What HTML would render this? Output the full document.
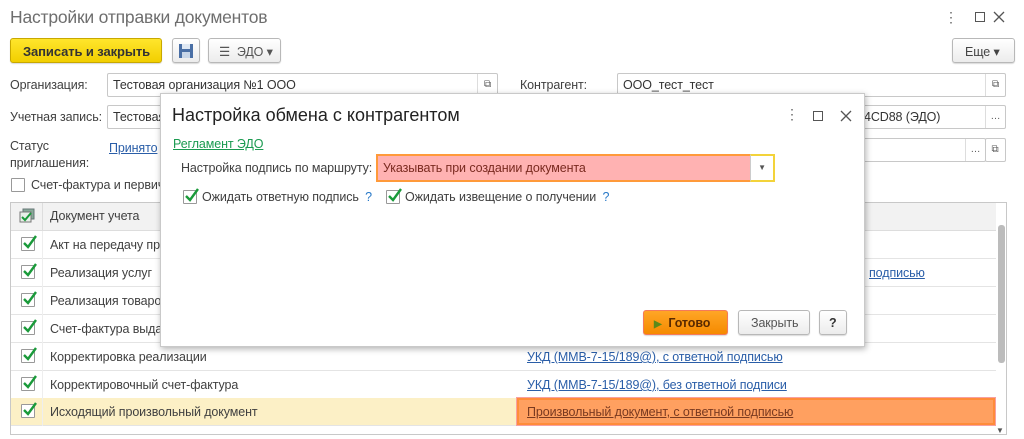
<!DOCTYPE html>
<html><head><meta charset="utf-8"><style>
*{box-sizing:border-box;margin:0;padding:0}
body{width:1024px;height:439px;overflow:hidden;background:#fff;font-family:"Liberation Sans",sans-serif;font-size:12.5px;letter-spacing:-0.1px;color:#404040;position:relative}
.a{position:absolute;white-space:nowrap}
.inp{position:absolute;border:1px solid #c8c8c8;border-radius:2px;background:#fff;height:24px;padding:4px 5px;color:#333}
.btn{position:absolute;border:1px solid #b8b8b8;border-radius:3px;background:linear-gradient(#fff,#ececec);height:25px;box-shadow:0 1px 1px rgba(0,0,0,.15)}
.ib{position:absolute;border-left:1px solid #ddd;width:20px;height:22px;top:0;right:0;font-size:10px;color:#555;text-align:center;line-height:22px}
.cb{position:absolute;width:14px;height:14px;border:1px solid #999;background:#fff;border-radius:1px}
.cb svg{position:absolute;left:0;top:-3px}
.row{position:absolute;left:11px;width:985px;height:28px;border-bottom:1px solid #e4e4e4}
.row .t{position:absolute;left:39px;top:7px}
.row .cb{left:10px;top:6px}
.lnk{color:#2a5ea8;text-decoration:underline}
</style></head><body>
<div class="a" style="left:10px;top:7px;font-size:17.5px;color:#6e6e6e;letter-spacing:-0.2px">Настройки отправки документов</div>
<div class="a" style="left:944px;top:9px;font-size:14px;color:#666">⋮</div>
<div class="a" style="left:975px;top:12px;width:10px;height:10px;border:1.5px solid #555"></div>
<svg class="a" style="left:993px;top:11px" width="12" height="12"><path d="M1 1L11 11M11 1L1 11" stroke="#555" stroke-width="1.3"/></svg>

<div class="btn" style="left:10px;top:38px;width:152px;background:linear-gradient(#ffe62c,#f2cf00);border-color:#c8a800;font-weight:bold;color:#333;padding:5px 0 0 12px;font-size:13px">Записать и закрыть</div>
<div class="btn" style="left:172px;top:38px;width:28px"><svg width="16" height="16" style="margin:4px 5px" viewBox="0 0 16 16"><rect x="1" y="1" width="14" height="14" fill="#4a6fa5"/><rect x="4" y="1" width="8" height="5" fill="#dfe8f3"/><rect x="4" y="9" width="8" height="6" fill="#c8d6e8"/></svg></div>
<div class="btn" style="left:208px;top:38px;width:73px;color:#555;padding:5px 0 0 10px">☰&nbsp; ЭДО ▾</div>
<div class="btn" style="left:952px;top:38px;width:63px;color:#444;padding:5px 0 0 12px">Еще ▾</div>

<div class="a" style="left:10px;top:78px">Организация:</div>
<div class="inp" style="left:107px;top:73px;width:391px">Тестовая организация №1 ООО<div class="ib">⧉</div></div>
<div class="a" style="left:520px;top:78px">Контрагент:</div>
<div class="inp" style="left:617px;top:73px;width:389px">ООО_тест_тест<div class="ib">⧉</div></div>
<div class="a" style="left:10px;top:110px">Учетная запись:</div>
<div class="inp" style="left:107px;top:105px;width:200px">Тестовая</div>
<div class="inp" style="left:820px;top:105px;width:186px;padding-left:43px">4CD88 (ЭДО)<div class="ib">…</div></div>
<div class="a" style="left:10px;top:138px;line-height:17px">Статус<br>приглашения:</div>
<div class="a lnk" style="left:109px;top:141px">Принято</div>
<div class="inp" style="left:820px;top:138px;width:166px"><div class="ib">…</div></div>
<div class="inp" style="left:985px;top:138px;width:21px;padding:0"><div class="ib" style="border:0">⧉</div></div>
<div class="cb" style="left:11px;top:178px;width:14px;height:14px"></div>
<div class="a" style="left:31px;top:178px">Счет-фактура и первич</div>

<div class="a" style="left:10px;top:202px;width:997px;height:233px;border:1px solid #c8c8c8"></div>
<div class="a" style="left:11px;top:203px;width:985px;height:28px;background:#f2f2f2;border-bottom:1px solid #ddd"></div>
<div class="a" style="left:42px;top:203px;width:1px;height:28px;background:#ddd"></div>
<div class="a" style="left:19px;top:208px"><svg width="16" height="16"><rect x="4" y="1" width="11" height="10" fill="#8a9" stroke="#677"/><rect x="1" y="4" width="11" height="10" fill="#e8f0e8" stroke="#777"/><path d="M3 9l3 3 6-7" stroke="#1a9a3a" stroke-width="2" fill="none"/></svg></div>
<div class="a" style="left:50px;top:209px">Документ учета</div>

<div class="row" style="top:231px"><div class="cb"><svg width="16" height="16"><path d="M2 8l4 4 8-11" stroke="#1a9a3a" stroke-width="2.4" fill="none"/></svg></div><div class="t">Акт на передачу пр</div></div>
<div class="row" style="top:259px"><div class="cb"><svg width="16" height="16"><path d="M2 8l4 4 8-11" stroke="#1a9a3a" stroke-width="2.4" fill="none"/></svg></div><div class="t">Реализация услуг</div><div class="t lnk" style="left:858px">подписью</div></div>
<div class="row" style="top:287px"><div class="cb"><svg width="16" height="16"><path d="M2 8l4 4 8-11" stroke="#1a9a3a" stroke-width="2.4" fill="none"/></svg></div><div class="t">Реализация товаро</div></div>
<div class="row" style="top:315px"><div class="cb"><svg width="16" height="16"><path d="M2 8l4 4 8-11" stroke="#1a9a3a" stroke-width="2.4" fill="none"/></svg></div><div class="t">Счет-фактура выда</div></div>
<div class="row" style="top:343px"><div class="cb"><svg width="16" height="16"><path d="M2 8l4 4 8-11" stroke="#1a9a3a" stroke-width="2.4" fill="none"/></svg></div><div class="t">Корректировка реализации</div><div class="t lnk" style="left:516px">УКД (ММВ-7-15/189@), с ответной подписью</div></div>
<div class="row" style="top:371px"><div class="cb"><svg width="16" height="16"><path d="M2 8l4 4 8-11" stroke="#1a9a3a" stroke-width="2.4" fill="none"/></svg></div><div class="t">Корректировочный счет-фактура</div><div class="t lnk" style="left:516px">УКД (ММВ-7-15/189@), без ответной подписи</div></div>
<div class="row" style="top:398px;background:#fcf0c6"><div class="cb"><svg width="16" height="16"><path d="M2 8l4 4 8-11" stroke="#1a9a3a" stroke-width="2.4" fill="none"/></svg></div><div class="t">Исходящий произвольный документ</div>
<div class="a" style="left:506px;top:0;width:478px;height:27px;background:#ffa060;border:2px solid #ff8c3a;box-shadow:0 0 0 1px #f7a0a0"></div><div class="t" style="left:516px;color:#7a3a20;text-decoration:underline">Произвольный документ, с ответной подписью</div></div>
<div class="a" style="left:42px;top:231px;width:1px;height:195px;background:#eee"></div>
<div class="a" style="left:998px;top:225px;width:7px;height:138px;background:#bcbcbc;border-radius:3px"></div>
<div class="a" style="left:996px;top:426px;font-size:8px;color:#555">▼</div>

<div class="a" style="left:160px;top:93px;width:705px;height:254px;background:#fff;border:1px solid #c9c9c9;box-shadow:1px 2px 6px rgba(0,0,0,.3)">
<div class="a" style="left:11px;top:11px;font-size:18px;color:#222;letter-spacing:0">Настройка обмена с контрагентом</div>
<div class="a" style="left:624px;top:12px;font-size:14px;color:#666">⋮</div>
<div class="a" style="left:652px;top:17px;width:10px;height:10px;border:1.5px solid #555"></div>
<svg class="a" style="left:679px;top:16px" width="12" height="12"><path d="M1 1L11 11M11 1L1 11" stroke="#555" stroke-width="1.3"/></svg>
<div class="a" style="left:12px;top:43px;color:#1a9a50;text-decoration:underline">Регламент ЭДО</div>
<div class="a" style="left:20px;top:67px">Настройка подпись по маршруту:</div>
<div class="a" style="left:215px;top:60px;width:398px;height:28px;background:#ffb2b2;border:2px solid #ff9a3a;padding:5px 0 0 5px;color:#7a2a20">Указывать при создании документа</div>
<div class="a" style="left:589px;top:60px;width:25px;height:28px;background:#fff;border:2px solid #f3d33a;border-left:1px solid #ccc;font-size:8px;text-align:center;line-height:24px;color:#555">▼</div>
<div class="cb" style="left:22px;top:96px"><svg width="16" height="16"><path d="M2 8l4 4 8-11" stroke="#1a9a3a" stroke-width="2.4" fill="none"/></svg></div>
<div class="a" style="left:41px;top:96px">Ожидать ответную подпись <span style="color:#2a7ac8;margin-left:3px">?</span></div>
<div class="cb" style="left:225px;top:96px"><svg width="16" height="16"><path d="M2 8l4 4 8-11" stroke="#1a9a3a" stroke-width="2.4" fill="none"/></svg></div>
<div class="a" style="left:244px;top:96px">Ожидать извещение о получении <span style="color:#2a7ac8;margin-left:3px">?</span></div>
<div class="btn" style="left:482px;top:216px;width:85px;background:linear-gradient(#ffa626,#f58a00);border-color:#f47a5a;font-weight:bold;color:#5a2a00;padding:5px 0 0 10px"><span style="color:#5a8a1a;font-size:10px">▶</span>&nbsp; Готово</div>
<div class="btn" style="left:577px;top:216px;width:72px;color:#555;padding:5px 0 0 12px">Закрыть</div>
<div class="btn" style="left:658px;top:216px;width:28px;font-weight:bold;color:#333;padding:5px 0 0 9px">?</div>
</div>
</body></html>
